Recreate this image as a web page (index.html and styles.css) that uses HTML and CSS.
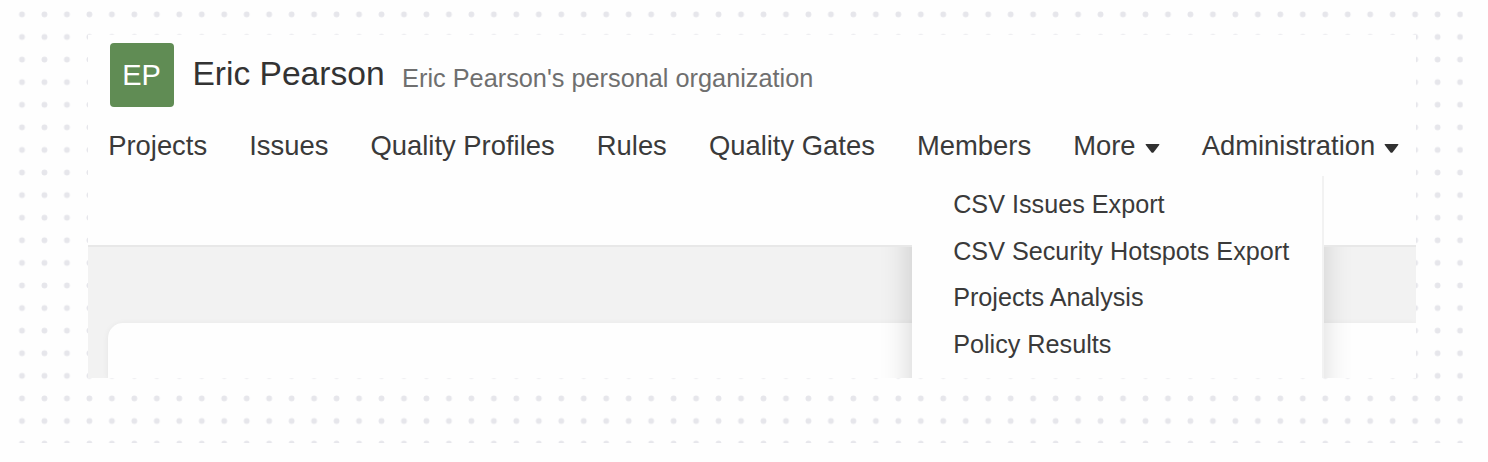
FILE: index.html
```html
<!DOCTYPE html>
<html lang="en">
<head>
<meta charset="utf-8">
<title>Eric Pearson</title>
<link rel="stylesheet" href="styles.css">
</head>
<body>
<svg class="dots" width="1463" height="443" aria-hidden="true">
  <defs>
    <pattern id="dot-grid" x="10.77" y="3.1" width="22.47" height="22.59" patternUnits="userSpaceOnUse">
      <circle cx="11.23" cy="11.3" r="2.9" fill="#e6e6eb"/>
    </pattern>
  </defs>
  <rect x="11" y="3" width="1452" height="440" fill="url(#dot-grid)"/>
</svg>
<main class="window">
  <header class="header">
    <div class="org">
      <span class="avatar">EP</span>
      <h1 class="org-name">Eric Pearson</h1>
      <span class="org-note">Eric Pearson's personal organization</span>
    </div>
    <nav class="nav">
      <a>Projects</a>
      <a>Issues</a>
      <a>Quality Profiles</a>
      <a>Rules</a>
      <a>Quality Gates</a>
      <a>Members</a>
      <a>More<svg class="caret" viewBox="0 0 15 9"><path d="M1.2 0h12.6q1.2 0 .4 1.1L8.7 8.2q-1.2 1-2.4 0L.8 1.1Q0 0 1.2 0z"/></svg></a>
      <a>Administration<svg class="caret" viewBox="0 0 15 9"><path d="M1.2 0h12.6q1.2 0 .4 1.1L8.7 8.2q-1.2 1-2.4 0L.8 1.1Q0 0 1.2 0z"/></svg></a>
    </nav>
  </header>
  <section class="content">
    <div class="card"></div>
    <div class="menu-shadow"></div>
  </section>
  <ul class="menu">
    <li>CSV Issues Export</li>
    <li>CSV Security Hotspots Export</li>
    <li>Projects Analysis</li>
    <li>Policy Results</li>
  </ul>
</main>
</body>
</html>
```

FILE: styles.css
```css
* {
  box-sizing: border-box;
}

body {
  margin: 0;
  height: 462px;
  padding: 35px 72px 0 88.4px;
  overflow: hidden;
  background: #fefefe;
  color: #3a3a3a;
  font-family: "Liberation Sans", Arial, sans-serif;
}

.dots {
  position: absolute;
  top: 0;
  left: 0;
}

.window {
  position: relative;
  display: flex;
  flex-direction: column;
  height: 343px;
  overflow: hidden;
  background: #fefefe;
}

.header {
  height: 212px;
  padding: 8px 0 0 17.6px;
  border-bottom: 2px solid #e8e8e8;
}

.org {
  display: flex;
  align-items: center;
  height: 64px;
  padding-left: 4.4px;
  white-space: nowrap;
}

.avatar {
  display: flex;
  align-items: center;
  justify-content: center;
  width: 64px;
  height: 64px;
  padding-right: 1.5px;
  border-radius: 4px;
  background: #608c54;
  color: #fff;
  font-size: 29px;
}

.org-name {
  margin: 0 0 2px 18px;
  color: #333;
  font-size: 33.6px;
  font-weight: 400;
  line-height: 40px;
}

.org-note {
  margin: 6px 0 0 17.5px;
  color: #6f6f6f;
  font-size: 25.3px;
  line-height: 30px;
}

.nav {
  display: flex;
  gap: 42.1px;
  margin: 23px 0 0 2.2px;
  font-size: 27.4px;
  line-height: 32px;
  white-space: nowrap;
}

.nav a {
  display: flex;
  align-items: center;
}

.caret {
  width: 15px;
  height: 9px;
  margin: 4px 0 0 9px;
  fill: #303030;
}

.content {
  position: relative;
  flex: 1;
  padding: 76px 0 0 19.6px;
  overflow: hidden;
  background: #f2f2f2;
}

.card {
  height: 100%;
  border-radius: 15px 0 0 0;
  background: #fefefe;
  box-shadow: 0 1px 6px rgba(0, 0, 0, 0.06);
}

/* The dropdown's shadow falls on the content area only, below the header. */
.menu-shadow {
  position: absolute;
  top: -40px;
  left: 823.6px;
  width: 412px;
  height: 260px;
  box-shadow: -2px 0 28px rgba(0, 0, 0, 0.17);
}

.menu {
  position: absolute;
  top: 141px;
  left: 823.6px;
  width: 412px;
  height: 202px;
  margin: 0;
  padding: 5px 0 0 41.2px;
  border-right: 2px solid #f2f2f2;
  background: #fefefe;
  list-style: none;
  font-size: 25.2px;
  line-height: 46.6px;
  white-space: nowrap;
}
```
